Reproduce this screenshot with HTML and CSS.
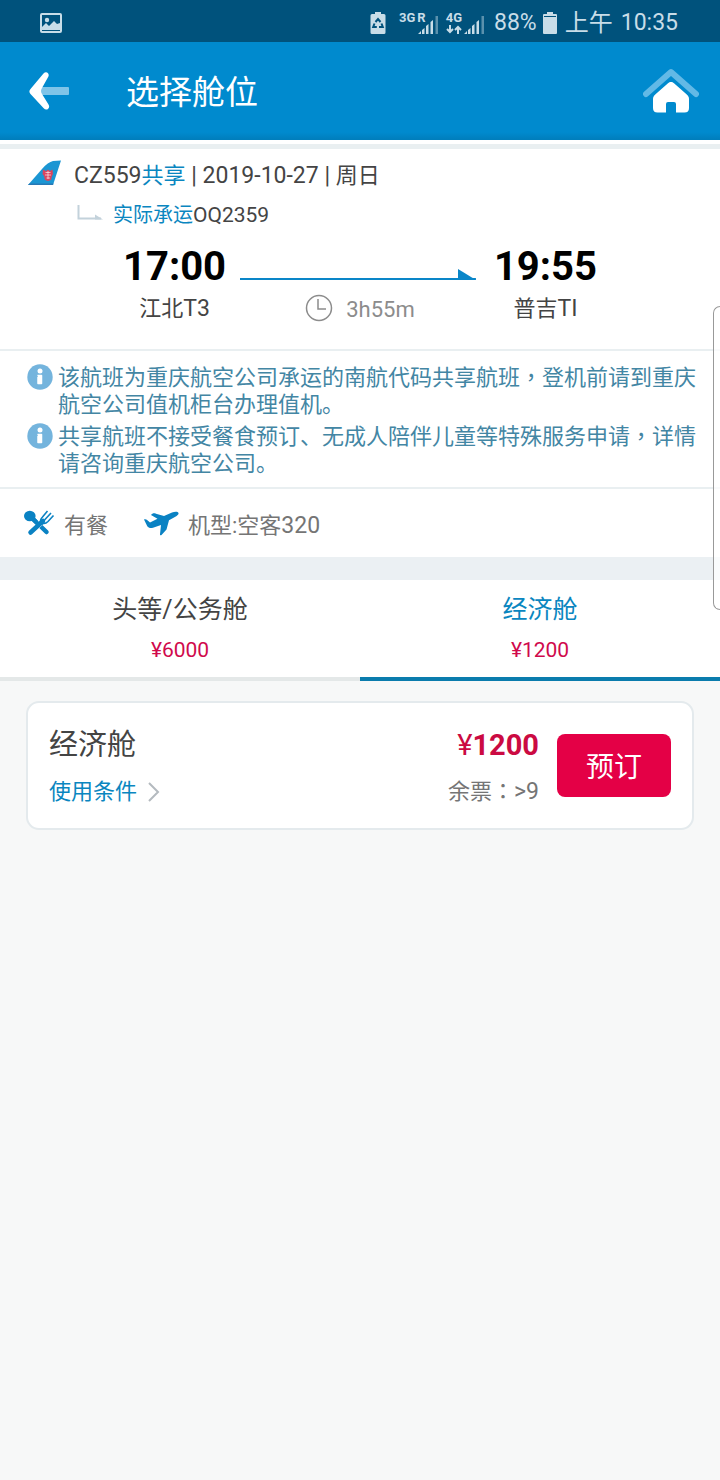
FILE: index.html
```html
<!DOCTYPE html>
<html lang="zh-CN">
<head>
<meta charset="utf-8">
<meta name="viewport" content="width=device-width, initial-scale=1">
<title>选择舱位</title>
<link rel="stylesheet" href="styles.css">
</head>
<body>
<div class="status-bar">
  <svg class="status-picture" width="22" height="20" viewBox="0 0 22 20"><rect x="1" y="1" width="20" height="18" rx="1" fill="none" stroke="currentColor" stroke-width="2"/><circle cx="7" cy="7" r="2.2" fill="currentColor"/><path d="M2 17v-3l4-4 3 3 5-5 3 3 3-1v7H2z" fill="currentColor"/></svg>
  <svg class="battery-saver" width="16" height="22" viewBox="0 0 16 22"><path d="M5 0h6v2h3a1.500 1.500 0 0 1 1.500 1.500v17A1.500 1.500 0 0 1 14 22H2A1.500 1.500 0 0 1 .5 20.500v-17A1.500 1.500 0 0 1 2 2h3z" fill="currentColor"/><g fill="none" stroke="#00527c" stroke-width="2"><path d="M5.500 10 8 7l2.500 3M4.500 11.500 3.200 15h3.600M11.500 11.500 12.800 15H9"/></g></svg>
  <div class="network">
    <span class="net-label">3G<span class="roam">R</span></span>
    <svg class="signal" width="22" height="19" viewBox="0 0 22 19" fill="currentColor"><path d="M0 19l3-3v3zM4 15l2.500-2v6H4zM8 11l2.500-2v10H8zM12.500 7l2.500-2v14h-2.500z"/><path d="M17.500 1H20v18h-2.500z" opacity=".45"/></svg>
  </div>
  <div class="network network-4g">
    <span class="net-stack"><span class="net-label">4G</span>
      <svg width="16" height="9" viewBox="0 0 16 9" fill="none" stroke="currentColor" stroke-width="2"><path d="M4 0v7M1 4l3 3 3-3M12 9V2M9 5l3-3 3 3"/></svg></span>
    <svg class="signal" width="22" height="19" viewBox="0 0 22 19" fill="currentColor"><path d="M0 19l3-3v3zM4 15l2.500-2v6H4zM8 11l2.500-2v10H8zM12.500 7l2.500-2v14h-2.500z"/><path d="M17.500 1H20v18h-2.500z" opacity=".45"/></svg>
  </div>
  <span class="battery-level">88%</span>
  <svg class="battery" width="14" height="22" viewBox="0 0 14 22" fill="currentColor"><path d="M4 0h6v2h3a1 1 0 0 1 1 1v18a1 1 0 0 1-1 1H1a1 1 0 0 1-1-1V3a1 1 0 0 1 1-1h3z"/><path d="M1 4.500h12" stroke="#00527c"/></svg>
  <span class="clock"><span class="ampm">上午</span> 10:35</span>
</div>

<header class="app-header">
  <button class="icon-button" type="button" aria-label="返回">
    <svg width="42" height="42" viewBox="0 0 42 42"><rect x="12" y="17" width="29" height="8" rx="1" fill="#7fc4e8"/><path d="M2.500 19 15.500 3.500c1.500-1.700 3.500-1.500 4.500-.3s.9 2.500 0 4L14 18c-1.300 2-1.300 4 0 6l6.500 10.500c1 1.600.9 3-.3 4.200s-3 1.200-4.500-.4L2.500 24c-1.500-1.700-1.500-3.300 0-5z" fill="#fff"/></svg>
  </button>
  <h1 class="title">选择舱位</h1>
  <a class="home" href="#" aria-label="首页">
    <svg width="56" height="46" viewBox="0 0 56 46"><path d="M3 26 28 4l25 22" fill="none" stroke="#62b9e6" stroke-width="6" stroke-linecap="round" stroke-linejoin="round"/><path d="M28 14c1.200 0 2 .4 3 1.200l12.500 11c2 1.700 2.500 3 2.500 5V40c0 3-1.500 4.500-4.500 4.500h-8.500V36a2 2 0 0 0-2-2h-6a2 2 0 0 0-2 2v8.500h-8.500C11.500 44.500 10 43 10 40v-8.800c0-2 .5-3.300 2.500-5l12.500-11c1-.8 1.800-1.200 3-1.200z" fill="#fff"/></svg>
  </a>
</header>

<main>
  <section class="flight">
    <div class="flight-line">
      <svg class="tail" width="34" height="26" viewBox="0 0 34 26"><path d="M0 25 14 9q6-7 11-8l8-.5L25 25z" fill="#1b96d3"/><path d="M0 25h25l.5-1.500H1.500z" fill="#2878b5"/><path d="M15 9.500l3 1.500 2-1.500 2 1.500 2.500-1.500.5 4.500-1 2-1 4-3 1-3-1-1-4-1.500-2z" fill="#d9455f"/><path d="M17.500 12.500h5M17 15h6M18.500 18h3.500M20 11v8" stroke="#fff" stroke-width=".6"/></svg>
      <p><span class="latin">CZ559</span><span class="accent">共享</span><span class="latin"> | 2019-10-27 | </span>周日</p>
    </div>
    <div class="carrier-line">
      <svg width="26" height="16" viewBox="0 0 26 16"><path d="M1.500 0v13.500H24" fill="none" stroke="#c3d2db" stroke-width="2"/><path d="M18 9.500l8 5h-8z" fill="#c3d2db"/></svg>
      <p><span class="accent">实际承运</span><span class="latin">OQ2359</span></p>
    </div>
    <div class="route">
      <div class="stop"><time class="time">17:00</time><span class="airport">江北<span class="latin">T3</span></span></div>
      <div class="path">
        <div class="arrow"><svg width="18" height="11" viewBox="0 0 18 11"><path d="M0 0l18 11H0z" fill="#0a86c8"/></svg></div>
        <div class="duration">
          <svg width="28" height="28" viewBox="0 0 28 28" fill="none" stroke="#8c8c8c" stroke-width="1.500"><circle cx="14" cy="14" r="12.500"/><path d="M13 5v10h8"/></svg>
          <span>3h55m</span>
        </div>
      </div>
      <div class="stop"><time class="time">19:55</time><span class="airport">普吉<span class="latin">TI</span></span></div>
    </div>
  </section>

  <ul class="notices">
    <li class="notice">
      <svg width="26" height="26" viewBox="0 0 26 26"><circle cx="13" cy="13" r="12.700" fill="#74b4dd"/><circle cx="13" cy="7" r="2.500" fill="#fff"/><path d="M10.500 11.500h4v8h-3.500v-6.500" fill="#fff" stroke="#fff" stroke-width="1.500" stroke-linejoin="round"/></svg>
      <p>该航班为重庆航空公司承运的南航代码共享航班<span class="punct" lang="zh-TW">，</span>登机前请到重庆航空公司值机柜台办理值机。</p>
    </li>
    <li class="notice">
      <svg width="26" height="26" viewBox="0 0 26 26"><circle cx="13" cy="13" r="12.700" fill="#74b4dd"/><circle cx="13" cy="7" r="2.500" fill="#fff"/><path d="M10.500 11.500h4v8h-3.500v-6.500" fill="#fff" stroke="#fff" stroke-width="1.500" stroke-linejoin="round"/></svg>
      <p>共享航班不接受餐食预订、无成人陪伴儿童等特殊服务申请<span class="punct" lang="zh-TW">，</span>详情请咨询重庆航空公司。</p>
    </li>
  </ul>

  <div class="facts">
    <div class="fact">
      <svg width="31" height="26" viewBox="0 0 31 26"><path d="M7 7l15.500 15" stroke="#0a82c3" stroke-width="4.500" stroke-linecap="round"/><path d="M18 11 6 22.500" stroke="#fff" stroke-width="6.500"/><path d="M19 11 6.500 22.500" stroke="#0a82c3" stroke-width="4.500" stroke-linecap="round"/><path d="M8 8l6 6" stroke="#0a82c3" stroke-width="4.500"/><ellipse cx="5.800" cy="6" rx="5.800" ry="5.300" fill="#0a82c3"/><path d="M17 13c-1-2-.5-4 1.500-6l5-6M20.500 10l6.500-7M18 13c2 1 4 .5 6-1.500l5.500-6" fill="none" stroke="#0a82c3" stroke-width="1.600"/><path d="M17 9l4 4-3 2-3-2z" fill="#0a82c3"/></svg>
      <span>有餐</span>
    </div>
    <div class="fact">
      <svg width="36" height="25" viewBox="0 0 36 25"><path d="M1 8.500c1-.6 2-.4 2.800.3L7 11.500l7.500-3.700L8 4c1.200-1.700 3-2 5-1.300L21 5l8-3.500C32 .3 35 .5 35.500 2S33.500 5.200 31 6.500l-5 2.800-2.500 9.200L18.500 24c-.8.600-1.700.300-1.500-.8l1-9.200-8 2.700c-2.500.8-4.500.2-5.700-1.500z" fill="#0a82c3"/></svg>
      <span>机型:空客<span class="latin">320</span></span>
    </div>
  </div>

  <div class="tabs" role="tablist">
    <button class="tab" type="button" role="tab" aria-selected="false"><span class="tab-name">头等/公务舱</span><span class="tab-price">¥6000</span></button>
    <button class="tab tab-active" type="button" role="tab" aria-selected="true"><span class="tab-name">经济舱</span><span class="tab-price">¥1200</span></button>
  </div>

  <article class="fare">
    <div class="fare-info">
      <h2 class="fare-name">经济舱</h2>
      <a class="terms" href="#">使用条件<svg width="14" height="22" viewBox="0 0 14 22"><path d="M2 2l9 9-9 9" fill="none" stroke="#b4babf" stroke-width="2"/></svg></a>
    </div>
    <div class="fare-price">
      <span class="price"><span class="yen">¥</span>1200</span>
      <span class="seats">余票<span class="punct" lang="zh-TW">：</span><span class="latin">&gt;9</span></span>
    </div>
    <button class="book" type="button">预订</button>
  </article>
</main>
<div class="edge-handle"></div>
</body>
</html>
```
FILE: styles.css
```css
* {
  box-sizing: border-box;
}

body {
  margin: 0;
  min-height: 100vh;
  position: relative;
  background: #f7f8f8;
  color: #444;
  font-family: Roboto, "Noto Sans CJK SC", sans-serif;
  font-size: 22px;
}

h1, h2, p, ul {
  margin: 0;
  padding: 0;
  font-weight: 400;
}

button {
  border: 0;
  padding: 0;
  background: none;
  font: inherit;
  color: inherit;
}

a {
  color: inherit;
  text-decoration: none;
}

svg {
  display: block;
  flex: none;
}

.latin {
  font-size: 23px;
}

.accent {
  color: #0a86c0;
}

.punct {
  font-family: "Noto Sans CJK TC", sans-serif;
  line-height: 1;
}

/* Status bar */
.status-bar {
  display: flex;
  align-items: center;
  height: 42px;
  padding: 4px 42px 0 40px;
  background: #00527c;
  color: #c8dde8;
  font-size: 23px;
  line-height: 32px;
}

.battery-saver {
  margin-left: auto;
}

.network {
  display: flex;
  align-items: flex-end;
  height: 22px;
  margin-left: 13px;
}

.network-4g {
  margin-left: 6px;
}

.net-label {
  align-self: flex-start;
  font-size: 13px;
  line-height: 12px;
  font-weight: 700;
}

.roam {
  margin-left: 2px;
}

.network:not(.network-4g) .signal {
  margin-left: -8px;
}

.net-stack {
  display: flex;
  flex-direction: column;
  justify-content: space-between;
  height: 22px;
}

.network-4g .signal {
  margin-left: 2px;
}

.battery-level {
  margin-left: 8px;
}

.battery {
  margin: 0 8px 0 6px;
}

.clock {
  display: flex;
  gap: 8px;
}

.ampm {
  font-size: 24px;
}

/* App header */
.app-header {
  display: flex;
  align-items: center;
  height: 98px;
  padding: 0 21px 0 28px;
  background: linear-gradient(#008ace 92%, #007dbb);
  color: #fff;
}

.title {
  flex: 1;
  padding: 3px 0 0 56px;
  font-size: 33px;
  line-height: 48px;
}

/* Flight summary */
main {
  display: flow-root;
  background: linear-gradient(#fff, #fff) top / 100% 541px no-repeat;
}

.flight {
  margin-top: 4px;
  padding: 4px 0 22px;
  border-top: 5px solid #e9eff1;
  border-bottom: 2px solid #e9eff1;
}

.flight-line {
  display: flex;
  align-items: center;
  gap: 12px;
  height: 40px;
  padding-left: 28px;
  white-space: pre;
}

.carrier-line {
  display: flex;
  align-items: center;
  gap: 10px;
  height: 40px;
  padding-left: 77px;
  font-size: 20px;
}

.carrier-line .latin {
  font-size: 21px;
}

.route {
  display: grid;
  grid-template-columns: auto 1fr auto;
  padding: 10px 123px 0;
}

.stop {
  display: flex;
  flex-direction: column;
  align-items: center;
}

.time {
  color: #000;
  font-size: 40px;
  font-weight: 700;
  line-height: 48px;
}

.airport {
  line-height: 36px;
}

.path {
  margin: 0 18px 0 14px;
}

.arrow {
  display: flex;
  justify-content: flex-end;
  align-items: flex-end;
  height: 37px;
  background: linear-gradient(#0a86c8, #0a86c8) bottom / 100% 2px no-repeat;
}

.duration {
  display: flex;
  justify-content: center;
  align-items: flex-start;
  gap: 13px;
  margin-top: 14px;
  padding-left: 4px;
  color: #8c8c8c;
  line-height: 32px;
}

/* Notices */
.notices {
  display: flex;
  flex-direction: column;
  gap: 5px;
  padding: 13px 20px 10px 27px;
  list-style: none;
  color: #4386a4;
  line-height: 27px;
}

.notice {
  display: flex;
  gap: 5px;
}

/* Meal and aircraft */
.facts {
  display: flex;
  gap: 35px;
  height: 70px;
  padding-left: 24px;
  border-top: 2px solid #e9eff1;
  color: #757575;
}

.fact {
  display: flex;
  align-items: center;
  gap: 9px;
}

/* Cabin tabs */
.tabs {
  display: grid;
  grid-template-columns: 1fr 1fr;
  border-top: 23px solid #ebf0f3;
  background: #fff;
}

.tab {
  display: flex;
  flex-direction: column;
  align-items: center;
  padding: 12px 0 5px;
  border-bottom: 4px solid #e4e8e8;
}

.tab-active {
  border-color: #0a7cad;
}

.tab-name {
  font-size: 25px;
  line-height: 36px;
}

.tab-active .tab-name {
  color: #0a86c0;
}

.tab-price {
  color: #d00a4c;
  font-size: 21px;
  line-height: 44px;
}

/* Fare card */
.fare {
  display: flex;
  align-items: center;
  margin: 20px 26px;
  padding: 18px 21px 13px;
  border: 2px solid #e4eaed;
  border-radius: 13px;
  background: #fff;
}

.fare-info {
  flex: 1;
}

.fare-name {
  font-size: 29px;
  line-height: 48px;
}

.terms {
  display: flex;
  align-items: center;
  gap: 10px;
  color: #0a86c0;
  line-height: 46px;
}

.fare-price {
  display: flex;
  flex-direction: column;
  align-items: flex-end;
  margin-right: 18px;
}

.price {
  color: #cb0a42;
  font-size: 29px;
  font-weight: 700;
  line-height: 48px;
}

.yen {
  font-weight: 400;
}

.seats {
  color: #757575;
  line-height: 46px;
}

.book {
  width: 114px;
  height: 63px;
  margin-bottom: 6px;
  border-radius: 8px;
  background: #e40046;
  color: #fff;
  font-size: 28px;
}

/* Edge panel handle floating over the page */
.edge-handle {
  position: absolute;
  top: 306px;
  right: 0;
  width: 7px;
  height: 304px;
  border: 1px solid #999;
  border-right: 0;
  border-radius: 8px 0 0 8px;
  background: rgba(255, 255, 255, .7);
}
```
